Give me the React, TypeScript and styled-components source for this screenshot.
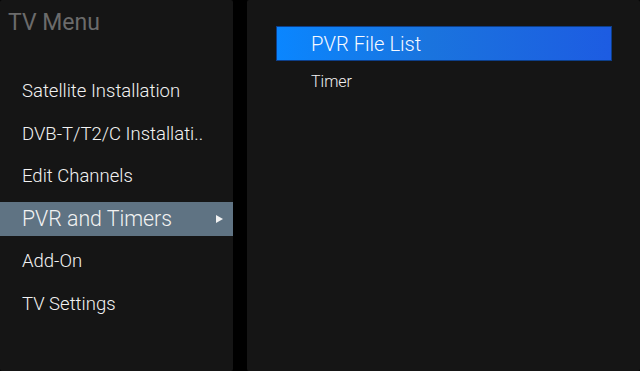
import styled, { createGlobalStyle } from 'styled-components';

const GlobalStyle = createGlobalStyle`
  html, body {
    margin: 0;
    padding: 0;
    background: #000;
  }
  body {
    font-family: Roboto, 'Noto Sans', sans-serif;
  }
`;

const Screen = styled.div`
  width: 640px;
  height: 371px;
  display: grid;
  grid-template-columns: 233px 393px;
  column-gap: 14px;
  background: #000;
  overflow: hidden;
`;

const Panel = styled.div`
  background: #151515;
  border-radius: 2px;
  display: flex;
  flex-direction: column;
`;

const Title = styled.h1`
  margin: 0;
  padding: 9px 0 0 8px;
  height: 74px;
  box-sizing: border-box;
  font-size: 23px;
  font-weight: 400;
  color: #6b6b6b;
`;

const MenuItem = styled.div<{ $active?: boolean }>`
  height: 34px;
  margin-bottom: 8.6px;
  padding: 0 10px 0 22px;
  display: flex;
  align-items: center;
  justify-content: space-between;
  font-size: ${(p) => (p.$active ? '21.3px' : '18.5px')};
  font-weight: 300;
  color: #f2f2f2;
  white-space: nowrap;
  background: ${(p) => (p.$active ? '#5f7383' : 'transparent')};
`;

const Arrow = styled.span`
  width: 0;
  height: 0;
  border-top: 4px solid transparent;
  border-bottom: 4px solid transparent;
  border-left: 7px solid #f2f2f2;
`;

const SubList = styled.div`
  padding: 27px 29px 0 30px;
  display: flex;
  flex-direction: column;
  gap: 5px;
`;

const SubItem = styled.div<{ $active?: boolean }>`
  height: 33px;
  padding-left: 34px;
  display: flex;
  align-items: center;
  font-size: ${(p) => (p.$active ? '20.2px' : '16px')};
  font-weight: 300;
  color: ${(p) => (p.$active ? '#f6f9ff' : '#f2f2f2')};
  background: ${(p) =>
    p.$active ? 'linear-gradient(90deg, #0a86ff 0%, #1a74de 45%, #1d5ce2 100%)' : 'transparent'};
  box-shadow: ${(p) => (p.$active ? '0 0 0 1px #0d3f8a' : 'none')};
`;

const menu = [
  'Satellite Installation',
  'DVB-T/T2/C Installati..',
  'Edit Channels',
  'PVR and Timers',
  'Add-On',
  'TV Settings',
];

export default function App() {
  return (
    <>
      <GlobalStyle />
      <Screen>
        <Panel>
          <Title>TV Menu</Title>
          {menu.map((label) => (
            <MenuItem key={label} $active={label === 'PVR and Timers'}>
              {label}
              {label === 'PVR and Timers' && <Arrow />}
            </MenuItem>
          ))}
        </Panel>
        <Panel>
          <SubList>
            <SubItem $active>PVR File List</SubItem>
            <SubItem>Timer</SubItem>
          </SubList>
        </Panel>
      </Screen>
    </>
  );
}
